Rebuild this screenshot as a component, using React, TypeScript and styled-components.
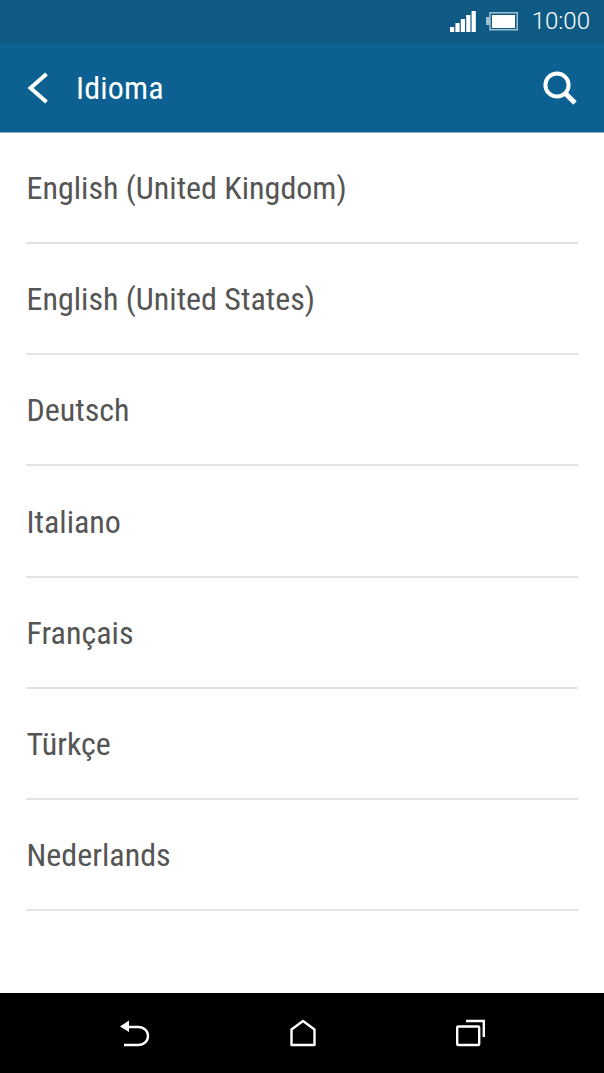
import React from "react";
import styled, { createGlobalStyle } from "styled-components";

const GlobalStyle = createGlobalStyle`
  html, body { margin: 0; padding: 0; background: #fff; }
  body { font-family: Roboto, "Noto Sans", sans-serif; }
`;

const Screen = styled.div`
  width: 604px;
  height: 1073px;
  display: flex;
  flex-direction: column;
  overflow: hidden;
  background: #fff;
`;

const StatusBar = styled.div`
  height: 43px;
  flex: none;
  background: #0e5a84;
  display: flex;
  align-items: center;
  justify-content: flex-end;
  padding: 0 14px 0 0;
  color: #fff;
`;

const StatusTime = styled.span`
  font-size: 24px;
  font-weight: 300;
  line-height: 43px;
  margin-left: 14px;
`;

const BatteryIcon = styled.svg`
  margin-left: 10px;
`;

const AppBar = styled.header`
  height: 90px;
  flex: none;
  box-sizing: border-box;
  background: #0c6192;
  display: flex;
  align-items: center;
  padding: 0 26px 0 26px;
  border-bottom: 1px solid #8fb4ca;
`;

const Title = styled.h1`
  flex: 1;
  margin: 1px 0 0 26px;
  font-size: 32px;
  font-weight: 400;
  font-stretch: 75%;
  letter-spacing: 0.2px;
  color: #fff;
`;

const List = styled.ul`
  flex: 1;
  margin: 0;
  padding: 0;
  list-style: none;
`;

const Row = styled.li`
  box-sizing: border-box;
  height: 111.17px;
  margin: 0 26px;
  padding: 1px 0 0 0.5px;
  border-bottom: 2px solid #e2e2e2;
  display: flex;
  align-items: center;
  font-size: 32px;
  font-stretch: 75%;
  color: #555;
`;

const NavBar = styled.nav`
  height: 80px;
  flex: none;
  background: #000;
  display: flex;
  align-items: center;
  justify-content: space-between;
  padding: 0 119px 0 120px;
`;

const languages = [
  "English (United Kingdom)",
  "English (United States)",
  "Deutsch",
  "Italiano",
  "Français",
  "Türkçe",
  "Nederlands",
];

export default function App() {
  return (
    <Screen>
      <GlobalStyle />
      <StatusBar>
        <svg width="26" height="21" viewBox="0 0 26 21" fill="#fff">
          <rect x="0" y="16" width="4.2" height="5" />
          <rect x="5.4" y="12" width="4.2" height="9" />
          <rect x="10.8" y="8" width="4.2" height="13" />
          <rect x="16.2" y="4" width="4.2" height="17" />
          <rect x="21.6" y="0" width="4.2" height="21" />
        </svg>
        <BatteryIcon width="32" height="19" viewBox="0 0 32 19">
          <rect x="4" y="0.75" width="27.25" height="17" fill="none" stroke="#9dc0d3" strokeWidth="1.5" />
          <rect x="0" y="5" width="4" height="8" fill="#9dc0d3" />
          <rect x="6" y="3" width="23" height="13" fill="#fff" />
        </BatteryIcon>
        <StatusTime>10:00</StatusTime>
      </StatusBar>
      <AppBar>
        <svg width="24" height="32" viewBox="0 0 24 32" fill="none" stroke="#fff" strokeWidth="4">
          <path d="M20.5 2 L4.5 16 L20.5 30" />
        </svg>
        <Title>Idioma</Title>
        <svg width="36" height="36" viewBox="0 0 36 36" fill="none" stroke="#fff">
          <circle cx="15" cy="15" r="11.6" strokeWidth="4" />
          <path d="M23.5 23.5 L33 33" strokeWidth="5" />
        </svg>
      </AppBar>
      <List>
        {languages.map((lang) => (
          <Row key={lang}>{lang}</Row>
        ))}
      </List>
      <NavBar>
        <svg width="30" height="28" viewBox="0 0 30 28" fill="none" stroke="#fff" strokeWidth="2.4">
          <path d="M4 26 H18 C24 26 28 22 28 17 C28 12 24 8 18 8 H6" />
          <path d="M0 7.5 L9 1.5 V13 Z" fill="#fff" stroke="none" />
        </svg>
        <svg width="26" height="28" viewBox="0 0 26 28" fill="none" stroke="#fff" strokeWidth="2.4">
          <path d="M13 2 L24.5 10.5 V26 H1.5 V10.5 Z" strokeLinejoin="round" />
        </svg>
        <svg width="29" height="28" viewBox="0 0 29 28" fill="none" stroke="#fff" strokeWidth="2.4">
          <rect x="1.2" y="7.5" width="22" height="18.5" rx="1" />
          <path d="M10 2 H27.8 V18" />
        </svg>
      </NavBar>
    </Screen>
  );
}
